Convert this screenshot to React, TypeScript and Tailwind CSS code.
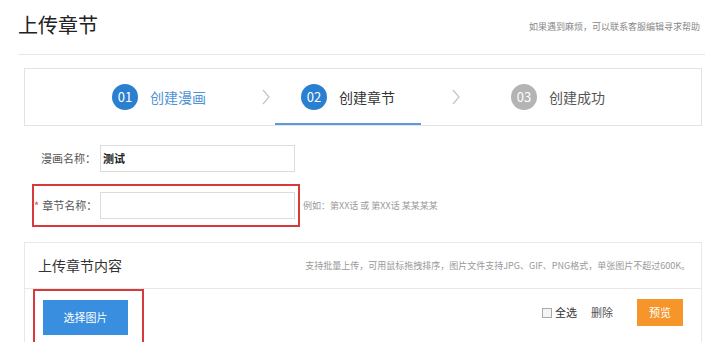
const font = { fontFamily: '"Noto Sans CJK SC", "Noto Sans", sans-serif' };

function Chevron() {
  return (
    <svg width="10" height="16" viewBox="0 0 10 16" className="shrink-0">
      <polyline points="2,1 8,8 2,15" fill="none" stroke="#c4c4c4" strokeWidth="1.2" />
    </svg>
  );
}

function Step({ num, label, state }: { num: string; label: string; state: "done" | "active" | "todo" }) {
  const circle = state === "todo" ? "bg-[#b4b4b4]" : "bg-[#2a7fd0]";
  const text = state === "done" ? "text-[#4d93d6]" : state === "active" ? "text-[#333]" : "text-[#555]";
  return (
    <div className="flex items-center gap-3">
      <span className={`flex h-[26px] w-[26px] items-center justify-center rounded-full text-[13px] text-white ${circle}`}>
        {num}
      </span>
      <span className={`text-[14px] ${text}`}>{label}</span>
    </div>
  );
}

export default function App() {
  return (
    <div className="h-[342px] w-[720px] overflow-hidden bg-white" style={font}>
      <div className="ml-[18px] mr-[15px] flex h-[55px] items-center justify-between border-b border-[#e6e6e6] pb-1">
        <h1 className="text-[20px] text-[#222]">上传章节</h1>
        <span className="mr-[5px] mt-1 text-[9px] text-[#888]">如果遇到麻烦，可以联系客服编辑寻求帮助</span>
      </div>

      <div className="ml-[24px] mr-[18px] mt-[13px] flex h-[58px] items-stretch border border-[#e3e3e3] pl-[87px]">
        <div className="flex items-center">
          <Step num="01" label="创建漫画" state="done" />
        </div>
        <div className="ml-[55px] flex items-center">
          <Chevron />
        </div>
        <div className="ml-[4px] flex items-center border-b-2 border-[#5b9cd8] px-[26px] pt-[2px]">
          <Step num="02" label="创建章节" state="active" />
        </div>
        <div className="ml-[30px] flex items-center">
          <Chevron />
        </div>
        <div className="ml-[50px] flex items-center">
          <Step num="03" label="创建成功" state="todo" />
        </div>
      </div>

      <div className="ml-[32px] mt-[11px] flex flex-col gap-[4px]">
        <div className="flex items-center">
          <div className="flex items-center border-2 border-transparent py-[6px] pr-[3px]">
            <label className="w-[62px] whitespace-nowrap text-right text-[11px] text-[#555]">漫画名称：</label>
            <div className="ml-[4px] flex h-[27px] w-[195px] items-center border border-[#dcdcdc] px-[2px] text-[11px] font-bold text-[#222]">
              测试
            </div>
          </div>
        </div>
        <div className="flex items-center">
          <div className="flex items-center border-2 border-[#d8393d] py-[6px] pr-[3px]">
            <label className="w-[62px] whitespace-nowrap text-right text-[11px] text-[#555]">
              <span className="mr-[3px] text-[#e34a4a]">*</span>章节名称：
            </label>
            <div className="ml-[4px] h-[27px] w-[195px] border border-[#dcdcdc]" />
          </div>
          <span className="ml-[3px] text-[9px] text-[#999]">例如：第XX话 或 第XX话 某某某某</span>
        </div>
      </div>

      <div className="ml-[24px] mr-[18px] mt-[15px] border border-[#e8e8e8]">
        <div className="flex h-[46px] items-center justify-between border-b border-[#e8e8e8] pl-[13px] pr-[11px]">
          <span className="text-[14px] text-[#333]">上传章节内容</span>
          <span className="text-[9px] text-[#999]">
            支持批量上传，可用鼠标拖拽排序，图片文件支持JPG、GIF、PNG格式，单张图片不超过600K。
          </span>
        </div>
        <div className="flex items-start justify-between pl-[8px] pr-[18px]">
          <div className="border-2 border-[#d8393d] pb-[14px] pl-[8px] pr-[14px] pt-[9px]">
            <button className="h-[35px] w-[85px] bg-[#3a8ee0] text-[11px] text-white">选择图片</button>
          </div>
          <div className="mt-[10px] flex items-center">
            <span className="h-[10px] w-[10px] border border-[#aaa] bg-[#f4f4f4]" />
            <span className="ml-[3px] text-[11px] text-[#333]">全选</span>
            <span className="ml-[14px] text-[11px] text-[#555]">删除</span>
            <button className="ml-[24px] h-[27px] w-[46px] bg-[#f5952a] text-[11px] text-white">预览</button>
          </div>
        </div>
      </div>
    </div>
  );
}
